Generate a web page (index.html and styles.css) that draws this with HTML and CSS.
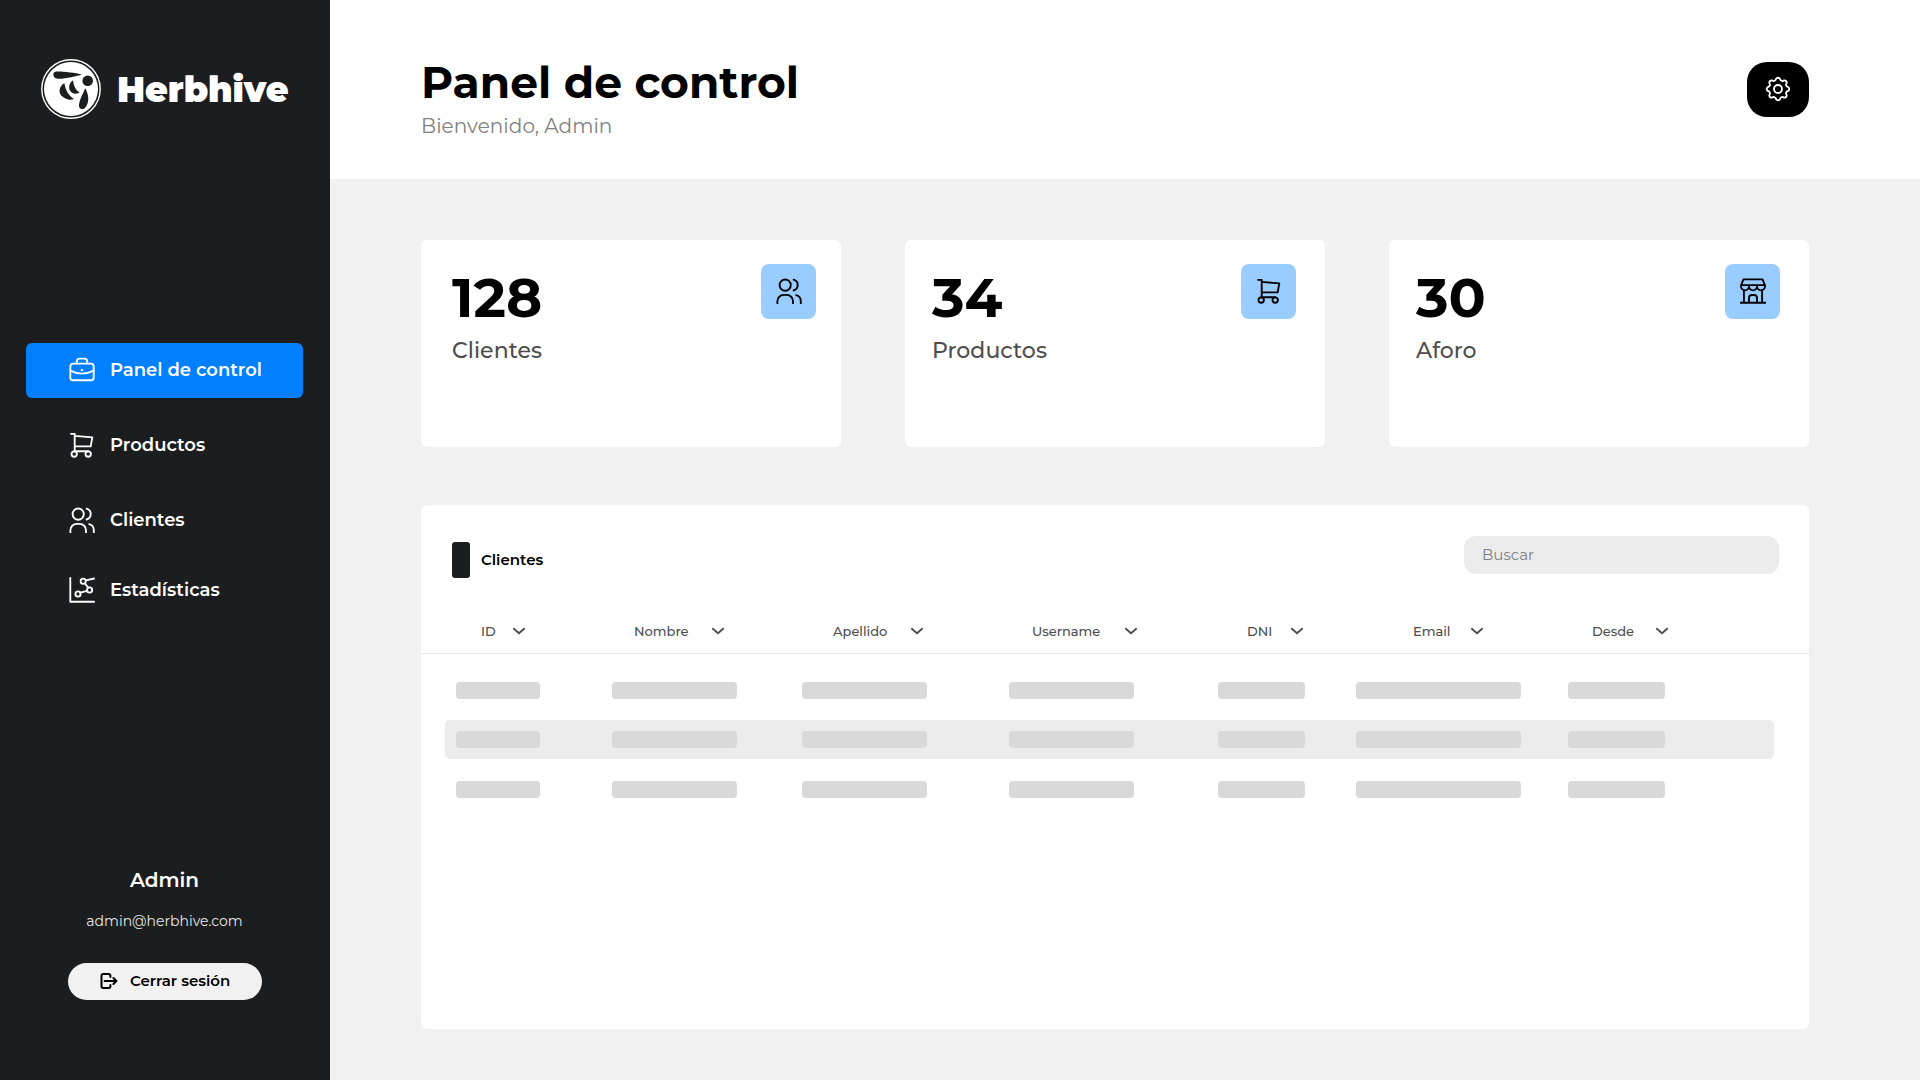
FILE: index.html
```html
<!DOCTYPE html>
<html lang="es">
<head>
<meta charset="utf-8">
<title>Herbhive – Panel de control</title>
<link rel="stylesheet" href="styles.css">
</head>
<body>
<svg class="sprite" aria-hidden="true">
  <symbol id="i-briefcase" viewBox="0 0 26 26"><rect x="1.3" y="6.6" width="23.4" height="16.6" rx="2.8"/><path d="M7.8 6.6V4.2a2.6 2.6 0 0 1 2.6-2.6h5.2a2.6 2.6 0 0 1 2.6 2.6v2.4M1.3 13.6Q13 19.6 24.7 13.6"/><path d="M12.6 12.9h.8"/></symbol>
  <symbol id="i-cart" viewBox="0 0 26 26"><path d="M2 1.8h3.7V19M5.7 3.9l17.6 1.4-1.6 9H5.7M5 19.2h14.2"/><circle cx="5.2" cy="22" r="2.7"/><circle cx="19.2" cy="22" r="2.7"/></symbol>
  <symbol id="i-users" viewBox="0 0 26 26"><circle cx="9.2" cy="7.1" r="5.6"/><path d="M17.6 1.7a5.6 5.6 0 0 1 0 10.8M1.4 25.6v-2.4a6.3 6.3 0 0 1 6.3-6.3h3a6.3 6.3 0 0 1 6.3 6.3v2.4M20.2 17.1a6.3 6.3 0 0 1 4.6 6.1v2.4"/></symbol>
  <symbol id="i-stats" viewBox="0 0 26 26"><path d="M1.3.9v23.8h23.9M11.1 15.6l7.1-1.8M15.8 6.3l3.4 4.3M16.8 3.4l8.4-1.9"/><circle cx="14.2" cy="4.2" r="2.6"/><circle cx="20.6" cy="13" r="2.6"/><circle cx="9" cy="17" r="2.6"/></symbol>
  <symbol id="i-shop" viewBox="0 0 26 26"><path d="M3.4 1.3h19.2l2.2 5.8H1.2zM1 7.1v1.2a4 4 0 0 0 8 0V7.1M9 8.3a4 4 0 0 0 8 0V7.1M17 8.3a4 4 0 0 0 8 0V7.1M3.9 11.8v12.9M22.1 11.8v12.9M.5 24.7h25M9 24.7V20a3 3 0 0 1 3-3h2a3 3 0 0 1 3 3v4.7"/></symbol>
  <symbol id="i-gear" viewBox="-13 -13 26 26"><circle r="4"/><path d="M10.1-2.01A2.3 2.3 0 0 1 10.1 2.01A2.3 2.3 0 0 0 8.56 5.72A2.3 2.3 0 0 1 5.72 8.56A2.3 2.3 0 0 0 2.01 10.1A2.3 2.3 0 0 1-2.01 10.1A2.3 2.3 0 0 0-5.72 8.56A2.3 2.3 0 0 1-8.56 5.72A2.3 2.3 0 0 0-10.1 2.01A2.3 2.3 0 0 1-10.1-2.01A2.3 2.3 0 0 0-8.56-5.72A2.3 2.3 0 0 1-5.72-8.56A2.3 2.3 0 0 0-2.01-10.1A2.3 2.3 0 0 1 2.01-10.1A2.3 2.3 0 0 0 5.72-8.56A2.3 2.3 0 0 1 8.56-5.72A2.3 2.3 0 0 0 10.1-2.01Z"/></symbol>
  <symbol id="i-logout" viewBox="0 0 18 18"><path d="M10.4 5V3.7A1.7 1.7 0 0 0 8.7 2H3.2a1.7 1.7 0 0 0-1.7 1.7v10.6A1.7 1.7 0 0 0 3.2 16h5.5a1.7 1.7 0 0 0 1.7-1.7V13M4.6 9h11.6M13.4 6l3 3-3 3"/></symbol>
  <symbol id="i-chevron" viewBox="0 0 14 8"><path d="M1.3 1.3L7 6.2l5.7-4.9"/></symbol>
</svg>

<div class="app">
  <aside class="sidebar">
    <div class="brand">
      <svg class="brand-logo" viewBox="0 0 60 60">
        <circle class="ring" cx="30" cy="30" r="29.2"/>
        <circle class="disc" cx="30" cy="30" r="27"/>
        <g class="bee">
          <path d="M15 12.6C22 12.4 34 13.8 41 15.6C36 17.4 23 20.2 16.5 19.8C11.4 19.2 11 13 15 12.6Z"/>
          <circle cx="46.7" cy="21.8" r="5.3"/>
          <path d="M44.2 29.3C46.8 34 49 41 45.4 47C42.4 52.4 37.4 50.6 38 45.6C38.6 40 42 35 44.2 29.3Z"/>
          <path d="M23.4 24C17.6 27.6 17.2 34 21.3 37.6C25 40.8 29.4 41.4 33 39.9C28 37 24.4 31.5 23.4 24Z"/>
          <path d="M32 21.2C27.4 24.6 27 30 30.2 33C33 35.4 36.2 35.2 38.4 33.3C35 31.4 32.6 27 32 21.2Z"/>
        </g>
      </svg>
      <span class="brand-name">Herbhive</span>
    </div>

    <nav class="nav">
      <a class="nav-item active"><svg class="icon"><use href="#i-briefcase"/></svg>Panel de control</a>
      <a class="nav-item"><svg class="icon"><use href="#i-cart"/></svg>Productos</a>
      <a class="nav-item"><svg class="icon"><use href="#i-users"/></svg>Clientes</a>
      <a class="nav-item last"><svg class="icon"><use href="#i-stats"/></svg>Estadísticas</a>
    </nav>

    <div class="account">
      <div class="account-name">Admin</div>
      <div class="account-mail">admin@herbhive.com</div>
      <button class="logout"><svg class="icon-logout"><use href="#i-logout"/></svg>Cerrar sesión</button>
    </div>
  </aside>

  <main class="main">
    <header class="header">
      <div>
        <h1 class="title">Panel de control</h1>
        <p class="subtitle">Bienvenido, Admin</p>
      </div>
      <button class="settings" aria-label="Ajustes"><svg class="icon"><use href="#i-gear"/></svg></button>
    </header>

    <div class="content">
      <section class="stats">
        <article class="card card-clients">
          <div><div class="value">128</div><div class="label">Clientes</div></div>
          <div class="tile"><svg class="icon"><use href="#i-users"/></svg></div>
        </article>
        <article class="card">
          <div><div class="value">34</div><div class="label">Productos</div></div>
          <div class="tile"><svg class="icon"><use href="#i-cart"/></svg></div>
        </article>
        <article class="card">
          <div><div class="value">30</div><div class="label">Aforo</div></div>
          <div class="tile"><svg class="icon"><use href="#i-shop"/></svg></div>
        </article>
      </section>

      <section class="panel">
        <div class="panel-head">
          <h2 class="panel-title"><span>Clientes</span></h2>
          <input class="search" type="text" placeholder="Buscar">
        </div>
        <div class="thead">
          <div class="th"><span class="th-in w-id">ID<svg class="chev"><use href="#i-chevron"/></svg></span></div>
          <div class="th"><span class="th-in w-name">Nombre<svg class="chev"><use href="#i-chevron"/></svg></span></div>
          <div class="th"><span class="th-in w-name">Apellido<svg class="chev"><use href="#i-chevron"/></svg></span></div>
          <div class="th"><span class="th-in w-user">Username<svg class="chev"><use href="#i-chevron"/></svg></span></div>
          <div class="th"><span class="th-in w-dni">DNI<svg class="chev"><use href="#i-chevron"/></svg></span></div>
          <div class="th"><span class="th-in w-mail">Email<svg class="chev"><use href="#i-chevron"/></svg></span></div>
          <div class="th"><span class="th-in w-since">Desde<svg class="chev"><use href="#i-chevron"/></svg></span></div>
        </div>
        <div class="tbody">
          <div class="row"><i class="bar b-id"></i><i class="bar"></i><i class="bar"></i><i class="bar"></i><i class="bar b-dni"></i><i class="bar b-mail"></i><i class="bar b-since"></i></div>
          <div class="row selected"><i class="bar b-id"></i><i class="bar"></i><i class="bar"></i><i class="bar"></i><i class="bar b-dni"></i><i class="bar b-mail"></i><i class="bar b-since"></i></div>
          <div class="row after"><i class="bar b-id"></i><i class="bar"></i><i class="bar"></i><i class="bar"></i><i class="bar b-dni"></i><i class="bar b-mail"></i><i class="bar b-since"></i></div>
        </div>
      </section>
    </div>
  </main>
</div>
</body>
</html>
```

FILE: styles.css
```css
* { box-sizing: border-box; margin: 0; padding: 0; }

body {
  font-family: "Montserrat", "Inter", sans-serif;
  background: #f1f1f1;
  color: #000;
}

svg { display: block; fill: none; stroke: currentColor; stroke-width: 1.85; stroke-linecap: round; stroke-linejoin: round; flex: none; }
.sprite { display: none; }
button { border: 0; font-family: inherit; }

.app { display: grid; grid-template-columns: 330px 1fr; height: 1080px; overflow: hidden; }

/* Sidebar */
.sidebar { background: #1c1d1f; color: #fff; display: flex; flex-direction: column; }
.brand { display: flex; align-items: center; gap: 16px; padding: 59px 0 0 41px; height: 119px; }
.brand-logo { width: 60px; height: 60px; stroke: none; }
.brand-logo .ring { stroke: #fff; stroke-width: 1.4; }
.disc { fill: #fff; }
.bee { fill: #1c1d1f; }
.brand-name { font-size: 35px; font-weight: 900; letter-spacing: -.1px; line-height: 40px; padding-top: 2px; }

.nav { display: flex; flex-direction: column; gap: 20px; padding: 224px 27px 0 26px; }
.nav-item { display: flex; align-items: center; gap: 15px; height: 55px; padding: 0 0 2px 43px; border-radius: 6px; font-size: 18px; font-weight: 600; }
.nav-item.active { background: #007fff; }
.nav-item.last { margin-top: -5px; }
.icon { width: 26px; height: 26px; }

.account { margin-top: auto; padding-bottom: 80px; display: flex; flex-direction: column; align-items: center; text-align: center; }
.account-name { font-size: 20px; font-weight: 600; line-height: 24px; margin-right: 1px; }
.account-mail { font-size: 14px; font-weight: 400; line-height: 20px; margin: 19px 1px 32px 0; color: #e6e6e6; }
.logout { display: flex; align-items: center; gap: 12px; width: 194px; height: 37px; padding: 0 0 2px 32px; border-radius: 19px; background: #f1f1f1; color: #000; font-size: 15px; font-weight: 600; }
.icon-logout { width: 18px; height: 18px; stroke-width: 2; }

/* Header */
.header { height: 179px; background: #fff; display: flex; justify-content: space-between; align-items: flex-start; padding: 56px 111px 0 91px; }
.title { font-size: 44px; font-weight: 700; line-height: 52px; }
.subtitle { font-size: 20px; font-weight: 400; letter-spacing: .05px; line-height: 24px; margin-top: 6px; color: #808080; }
.settings { width: 62px; height: 55px; margin-top: 6px; padding-bottom: 2px; border-radius: 20px; background: #000; color: #fff; display: flex; align-items: center; justify-content: center; }

/* Stats */
.content { padding: 61px 111px 0 91px; }
.stats { display: grid; grid-template-columns: repeat(3, 420px); gap: 64px; }
.card { height: 207px; background: #fff; border-radius: 6px; display: flex; justify-content: space-between; padding: 24px 29px 0 27px; }
.card-clients { padding: 24px 25px 0 31px; }
.value { font-size: 55px; font-weight: 700; line-height: 60px; margin-top: 4px; }
.label { font-size: 22px; font-weight: 500; letter-spacing: .05px; line-height: 28px; margin-top: 9px; color: #4d4d4d; }
.tile { width: 55px; height: 55px; padding-bottom: 2px; border-radius: 8px; background: #99ccff; display: flex; align-items: center; justify-content: center; }

/* Clients table */
.panel { margin-top: 58px; height: 524px; background: #fff; border-radius: 6px; }
.panel-head { height: 105px; display: flex; justify-content: space-between; align-items: flex-start; padding: 31px 30px 0 31px; }
.panel-title { display: flex; align-items: center; gap: 11px; height: 36px; margin-top: 6px; font-size: 15px; font-weight: 600; }
.panel-title span { padding-bottom: 2px; }
.panel-title::before { content: ""; width: 18px; height: 36px; border-radius: 3px; background: #1c1d1f; }
.search { width: 315px; height: 38px; border: 0; border-radius: 12px; background: #ececec; padding: 0 18px 2px; font: 400 15px "Montserrat", "Inter", sans-serif; }
.search::placeholder { color: #808080; opacity: 1; }

.thead { height: 44px; border-bottom: 1px solid #e8e8e8; display: grid; grid-template-columns: 153px 199px 199px 215px 166px 179px 1fr; align-items: center; padding: 0 0 2px 60px; font-size: 13px; font-weight: 500; color: #4d4d4d; }
.th-in { display: flex; align-items: center; justify-content: space-between; }
.chev { width: 14px; height: 8px; stroke-width: 1.9; stroke-linecap: butt; stroke-linejoin: miter; position: relative; top: .5px; }
.w-id { width: 45px; }
.w-name { width: 91px; }
.w-user { width: 106px; }
.w-dni { width: 57px; }
.w-mail { width: 71px; }
.w-since { width: 77px; }

.tbody { padding: 17px 35px 0 24px; }
.row { height: 39px; margin-bottom: 10px; padding-left: 11px; border-radius: 5px; display: grid; grid-template-columns: 156px 190px 207px 209px 138px 212px 1fr; align-items: center; }
.row.selected { background: #ececec; }
.row.after { margin-top: 11px; }
.bar { width: 125px; height: 17px; border-radius: 4px; background: #d9d9d9; }
.b-id { width: 84px; }
.b-dni { width: 87px; }
.b-mail { width: 165px; }
.b-since { width: 97px; }
```
